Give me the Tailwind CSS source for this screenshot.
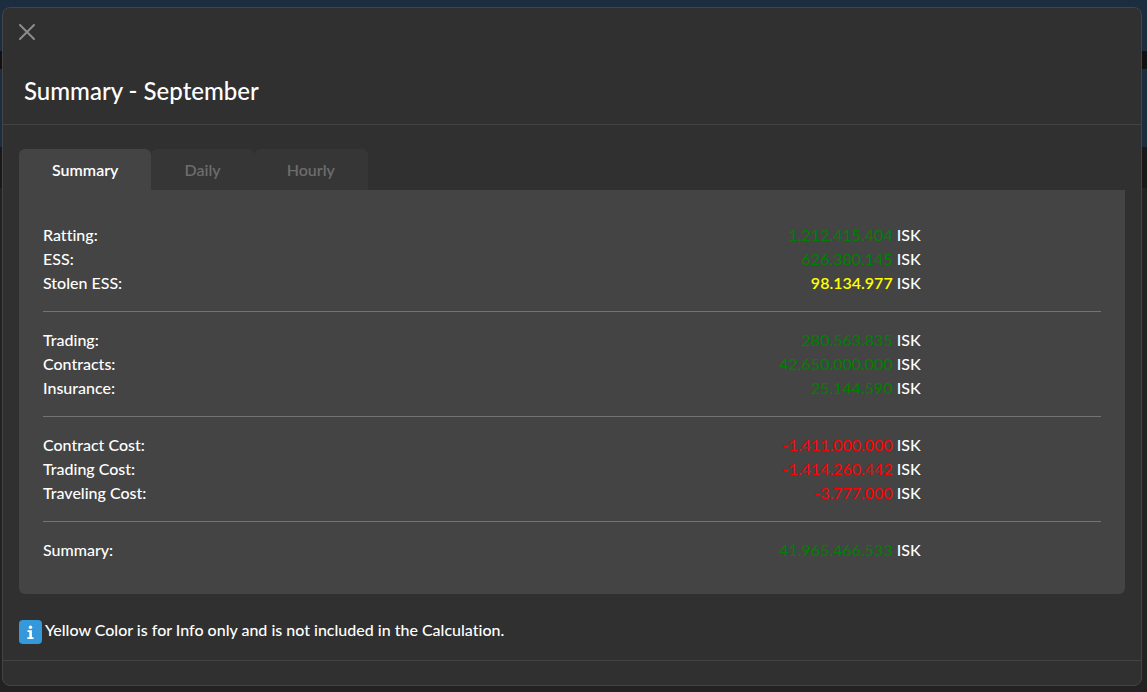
<!DOCTYPE html>
<html lang="en">
<head>
<meta charset="utf-8">
<title>Summary - September</title>
<script src="https://cdn.jsdelivr.net/npm/@tailwindcss/browser@4"></script>
</head>
<body class="relative min-h-screen bg-[#222222] font-['Lato',sans-serif] text-base text-white [font-variant-ligatures:none]">
  <div class="absolute inset-x-0 top-0" aria-hidden="true">
    <div class="h-[51px] bg-[#1c2d40]"></div>
    <div class="h-[18px] bg-[#111111]"></div>
    <div class="h-[78px] bg-[#1c2d40]"></div>
    <div class="h-[41px] bg-[#191919]"></div>
  </div>
  <div class="relative pt-[7px] pr-[5px] pb-[6px] pl-[2px]">
    <div role="dialog" aria-labelledby="title" class="rounded-lg border border-[#444444] bg-[#303030]">
      <header class="border-b border-[#444444] p-4">
        <button type="button" aria-label="Close" class="block size-4 text-[#8c8c8c]">
          <svg viewBox="0 0 16 16" class="size-4" fill="none" stroke="currentColor" stroke-width="2" stroke-linecap="round"><path d="M1 1l14 14M15 1L1 15"/></svg>
        </button>
        <h1 id="title" class="mt-[34px] px-[5px] text-2xl/[34px] font-medium">Summary - September</h1>
      </header>
      <main class="px-4 pt-6 pb-4">
        <div role="tablist" class="flex">
          <button type="button" role="tab" aria-selected="true" class="h-[41px] rounded-t-md bg-[#444444] px-[33px] font-semibold">Summary</button>
          <button type="button" role="tab" aria-selected="false" class="h-[41px] rounded-t-md bg-[#363636] px-[33px] font-semibold text-[#6c6c6c]">Daily</button>
          <button type="button" role="tab" aria-selected="false" class="h-[41px] rounded-t-md bg-[#363636] px-[33px] font-semibold text-[#6c6c6c]">Hourly</button>
        </div>
        <section role="tabpanel" class="rounded-b-md bg-[#444444] px-6 pt-[33px] pb-8 font-medium">
          <dl class="w-10/12 pr-1">
            <div class="flex justify-between"><dt>Ratting:</dt><dd><span class="font-normal text-[#008000]">1.212.415.404</span> ISK</dd></div>
            <div class="flex justify-between"><dt>ESS:</dt><dd><span class="font-normal text-[#008000]">626.380.145</span> ISK</dd></div>
            <div class="flex justify-between"><dt>Stolen ESS:</dt><dd><span class="font-semibold text-[#ffff00]">98.134.977</span> ISK</dd></div>
          </dl>
          <hr class="my-4 border-[#737373]">
          <dl class="w-10/12 pr-1">
            <div class="flex justify-between"><dt>Trading:</dt><dd><span class="font-normal text-[#008000]">280.563.835</span> ISK</dd></div>
            <div class="flex justify-between"><dt>Contracts:</dt><dd><span class="font-normal text-[#008000]">42.650.000.000</span> ISK</dd></div>
            <div class="flex justify-between"><dt>Insurance:</dt><dd><span class="font-normal text-[#008000]">25.144.590</span> ISK</dd></div>
          </dl>
          <hr class="my-4 border-[#737373]">
          <dl class="w-10/12 pr-1">
            <div class="flex justify-between"><dt>Contract Cost:</dt><dd><span class="font-normal text-[#ff0000]">-1.411.000.000</span> ISK</dd></div>
            <div class="flex justify-between"><dt>Trading Cost:</dt><dd><span class="font-normal text-[#ff0000]">-1.414.260.442</span> ISK</dd></div>
            <div class="flex justify-between"><dt>Traveling Cost:</dt><dd><span class="font-normal text-[#ff0000]">-3.777.000</span> ISK</dd></div>
          </dl>
          <hr class="my-4 border-[#737373]">
          <dl class="w-10/12 pr-1">
            <div class="flex justify-between"><dt>Summary:</dt><dd><span class="font-normal text-[#008000]">41.965.466.533</span> ISK</dd></div>
          </dl>
        </section>
        <p class="mt-6 flex items-start gap-[3px] pt-[2px] leading-5 font-medium">
          <svg viewBox="0 0 23 24" class="h-6 w-[23px]" aria-hidden="true"><rect width="23" height="24" rx="4" fill="#3498db"/><circle cx="11.5" cy="7.3" r="1.7" fill="#fff"/><path d="M8.5 10.2h4.400v7h1.700V19H8.300v-1.800h2v-5.200H8.500z" fill="#fff"/></svg>
          <span>Yellow Color is for Info only and is not included in the Calculation.</span>
        </p>
      </main>
      <footer class="h-[25px] border-t border-[#444444]"></footer>
    </div>
  </div>
</body>
</html>
